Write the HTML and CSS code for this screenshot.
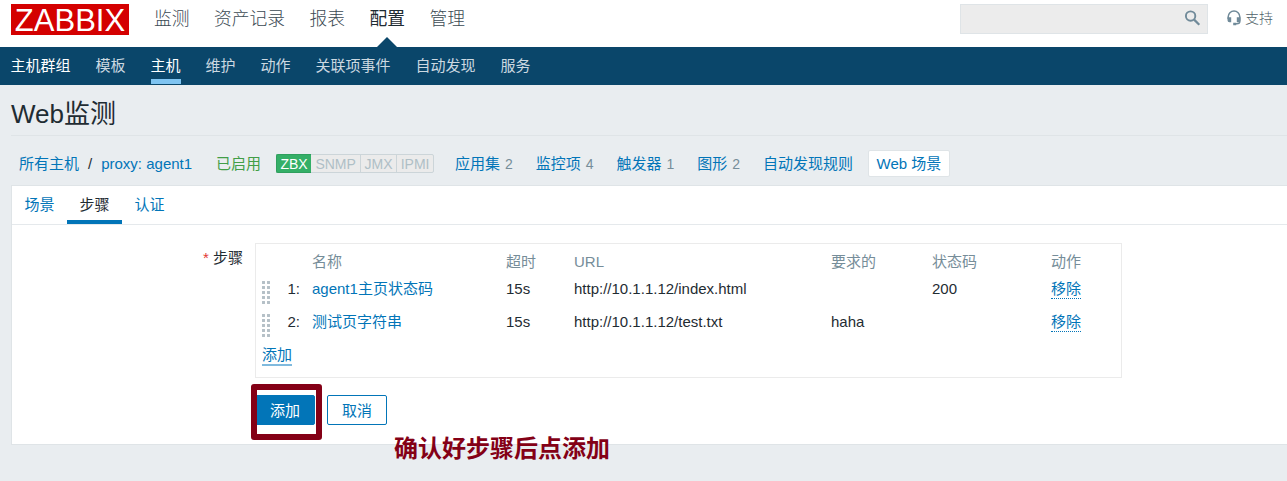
FILE: index.html
```html
<!DOCTYPE html>
<html lang="zh-CN">
<head>
<meta charset="utf-8">
<title>Web监测</title>
<link rel="stylesheet" href="styles.css">
</head>
<body>
<header class="top">
  <a class="logo"><span class="logo-text">ZABBIX</span></a>
  <nav class="main-nav">
    <a>监测</a><a>资产记录</a><a>报表</a><a class="active">配置</a><a>管理</a>
  </nav>
  <div class="search">
    <svg width="18" height="18" viewBox="0 0 18 18"><circle cx="6.6" cy="6.1" r="4.7" fill="none" stroke="#708a99" stroke-width="1.9"/><path d="M10.1 9.6L15.3 14.8" stroke="#708a99" stroke-width="2.2" fill="none"/></svg>
  </div>
  <a class="support">
    <svg width="14" height="16" viewBox="0 0 14 16"><path d="M1.2 9V6.8a5.8 5.8 0 0 1 11.6 0V11.5q0 2.3-3 2.3H8" fill="none" stroke="#708a99" stroke-width="1.5"/><path d="M.5 7.3h3.7v5H2.5q-2 0-2-2zM9.8 7.3h3.7v3q0 2-2 2H9.8zM6.2 12.8h3v2.4h-3z" fill="#708a99"/></svg>
    <span>支持</span>
  </a>
</header>
<nav class="sub-nav">
  <a class="focus">主机群组</a><a>模板</a><a class="active">主机</a><a>维护</a><a>动作</a><a>关联项事件</a><a>自动发现</a><a>服务</a>
</nav>
<main>
  <h1>Web监测</h1>
  <div class="crumbs">
    <a class="all">所有主机</a><span class="slash">/</span><a class="host">proxy: agent1</a>
    <span class="enabled">已启用</span>
    <span class="status"><b class="on">ZBX</b><b class="snmp">SNMP</b><b class="jmx">JMX</b><b class="ipmi">IPMI</b></span>
    <span class="links">
      <span><a>应用集</a><sup>2</sup></span>
      <span><a>监控项</a><sup>4</sup></span>
      <span><a>触发器</a><sup>1</sup></span>
      <span><a>图形</a><sup>2</sup></span>
      <span><a>自动发现规则</a></span>
    </span>
    <a class="selected">Web 场景</a>
  </div>
  <section class="panel">
    <div class="tabs"><a>场景</a><a class="active">步骤</a><a>认证</a></div>
    <div class="form">
      <label><i>*</i> 步骤</label>
      <div class="field">
        <div class="steps">
          <div class="row head"><span></span><span></span><span>名称</span><span>超时</span><span>URL</span><span>要求的</span><span>状态码</span><span>动作</span></div>
          <div class="row"><span class="drag"></span><span class="num">1:</span><a>agent1主页状态码</a><span>15s</span><span>http://10.1.1.12/index.html</span><span></span><span>200</span><span><a class="remove">移除</a></span></div>
          <div class="row"><span class="drag"></span><span class="num">2:</span><a>测试页字符串</a><span>15s</span><span>http://10.1.1.12/test.txt</span><span>haha</span><span></span><span><a class="remove">移除</a></span></div>
          <a class="add">添加</a>
        </div>
        <div class="buttons">
          <button class="primary">添加</button><button>取消</button>
          <span class="marker"></span>
          <strong class="note">确认好步骤后点添加</strong>
        </div>
      </div>
    </div>
  </section>
</main>
</body>
</html>
```
FILE: styles.css
```css
* { box-sizing: border-box; }
body {
  margin: 0;
  height: 481px;
  overflow: hidden;
  background: #e9edf0;
  color: #1f2c33;
  font: 15px/20px "Liberation Sans", "Noto Sans CJK SC", sans-serif;
}
a { color: #0275b8; white-space: nowrap; }
.top { display: flex; height: 47px; background: #fff; padding-left: 11px; }
.logo { width: 118px; height: 31px; margin-top: 4px; background: #d40000; color: #fff; text-align: center; font-size: 31px; line-height: 33px; }
.logo-text { display: inline-block; margin: 0 -10px; }
.main-nav { display: flex; gap: 24.5px; margin-left: 25px; font-size: 17.75px; line-height: 39px; font-weight: 300; }
.main-nav a { color: #3c4a53; height: 47px; }
.main-nav .active { color: #1f2c33; font-weight: 400; position: relative; }
.main-nav .active::after {
  content: ""; position: absolute; bottom: 0; left: 50%; margin-left: -10px;
  border: 10px solid transparent; border-top: 0; border-bottom-color: #0a466a;
}
.search { margin: 4px 0 0 auto; width: 248px; height: 30px; border: 1px solid #dfe4e7; background: #ececec; display: flex; justify-content: flex-end; padding: 5px 5px 0 0; }
.support { display: flex; width: 79px; padding: 10px 0 0 19px; gap: 4px; font-size: 14px; line-height: 17px; color: #4f5f69; font-weight: 300; }
.sub-nav { height: 38px; background: #0a466a; display: flex; gap: 25px; padding-left: 10.5px; line-height: 38px; }
.sub-nav a { color: #ccd9e1; height: 37px; }
.sub-nav .focus { color: #fff; }
.sub-nav .active { color: #fff; border-bottom: 5px solid #7fc4f1; }
main { padding-left: 11px; }
h1 { margin: 0; height: 51px; font-size: 26px; line-height: 58px; font-weight: 400; border-bottom: 1px solid #dfe4e7; }
.crumbs { display: flex; align-items: center; height: 49px; padding: 6px 0 0 8px; line-height: 20px; white-space: nowrap; }
.slash { margin: 0 9px; }
.enabled { color: #429e47; margin-left: 24px; }
.status { display: flex; margin-left: 15px; height: 19px; width: 158px; border: 1px solid #ccd5d9; border-radius: 2px; background: #ebebeb; }
.status b { font-weight: 400; font-size: 14px; line-height: 18px; color: #afbfc6; text-align: center; border-left: 1px solid #ccd5d9; }
.status .on { width: 35px; margin: -1px 0 -1px -1px; border: 1px solid #2f9f5e; border-right: 0; background: #34af67; color: #fff; border-radius: 2px 0 0 2px; }
.status .snmp { width: 49px; border-left: 0; }
.jmx { width: 36px; }
.ipmi { flex: 1; }
.links { display: flex; gap: 23px; margin-left: 21px; }
sup { font-size: 14px; line-height: 20px; vertical-align: baseline; color: #768d99; margin-left: 4.9px; }
.selected { margin-left: 15px; width: 82px; height: 27px; line-height: 25px; text-align: center; background: #fff; border: 1px solid #dfe4e7; border-radius: 2px; }
.panel { height: 260px; background: #fff; border: 1px solid #dfe4e7; border-right: 0; }
.tabs { height: 39px; display: flex; border-bottom: 1px solid #e5e9ec; line-height: 38px; }
.tabs a { width: 55px; text-align: center; height: 38px; }
.tabs .active { color: #1f2c33; border-bottom: 4px solid #0275b8; }
.form { display: flex; padding-top: 18px; }
label { width: 231px; text-align: right; line-height: 30px; }
label i { color: #e33734; font-style: normal; }
.field { margin-left: 12px; }
.steps { width: 867px; height: 135px; border: 1px solid #ebebeb; padding: 5px 6px; }
.row { display: grid; grid-template-columns: 9px 29px 194px 68px 257px 101px 119px 60px; height: 33px; line-height: 20px; padding-top: 3px; white-space: nowrap; }
.row > :nth-child(3) { padding-left: 12px; }
.row > :nth-child(n+4) { margin-left: 12px; }
.head { height: 27px; line-height: 26px; padding: 0; color: #768d99; }
.num { text-align: right; }
.drag {
  width: 8px; height: 23px; margin-top: 2px;
  background: radial-gradient(circle at 1.5px 1.5px, #b5c0c7 1.4px, transparent 1.7px) 0 0 / 5px 5px;
}
.remove, .add { display: inline-block; height: 20px; }
.remove { border-bottom: 1px dotted #0275b8; }
.add { border-bottom: 2px solid #80bade; margin-top: 3px; height: 21px; }
.buttons { position: relative; display: flex; gap: 12px; padding-top: 17px; }
button { font: inherit; width: 60px; height: 30px; padding: 1px 0 0; border: 1px solid #0275b8; border-radius: 2px; background: #fff; color: #0275b8; }
.primary { background: #0275b8; color: #fff; }
.marker { position: absolute; left: -4px; top: 6px; width: 71px; height: 56px; border: 6px solid #840016; border-radius: 3px; }
.note { position: absolute; left: 139px; top: 53px; font-size: 24px; line-height: 36px; color: #840016; white-space: nowrap; }
```
